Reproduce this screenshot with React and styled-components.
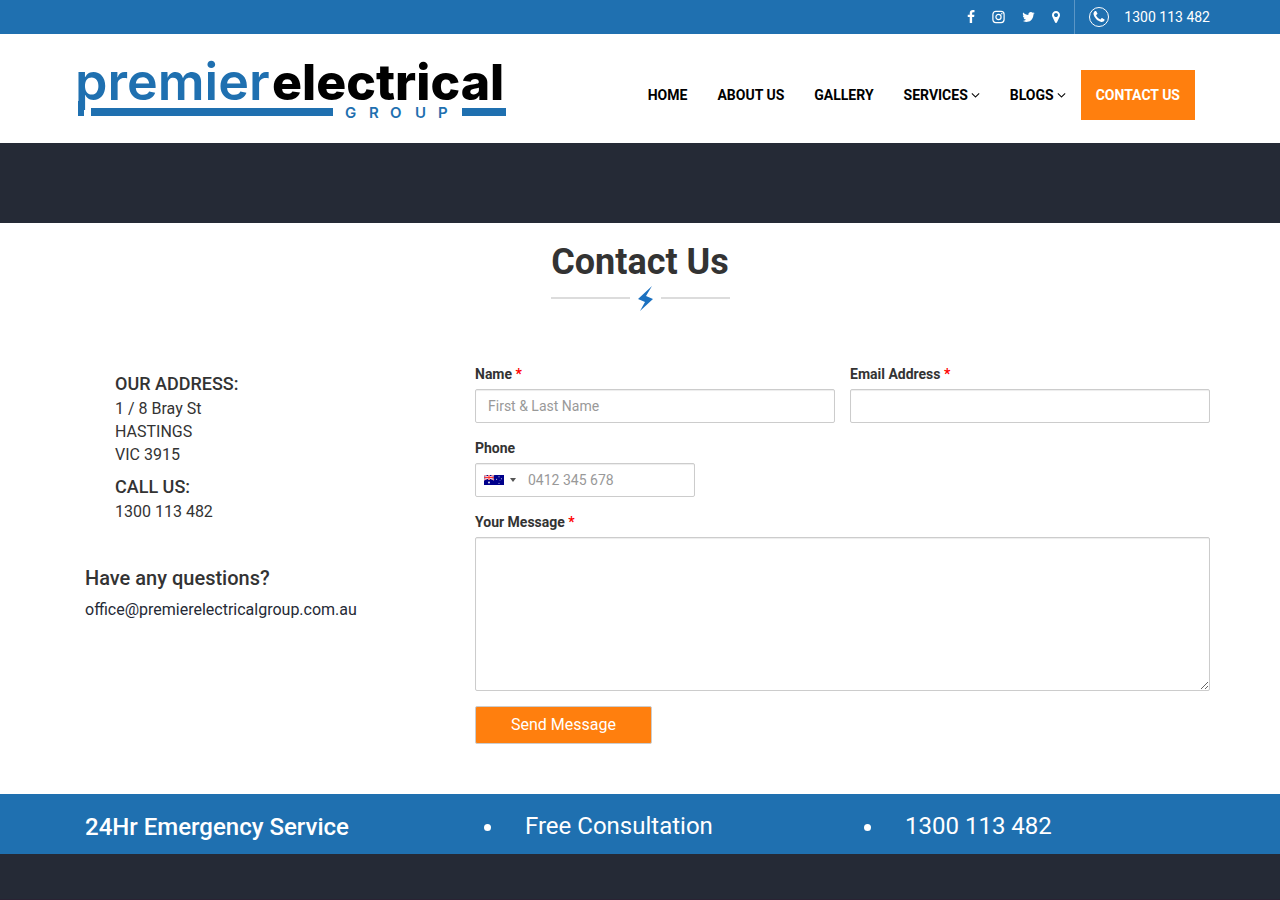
import React, { useState } from "react";
import styled, { createGlobalStyle } from "styled-components";

const navItems = [
  { label: "Home" },
  { label: "About Us" },
  { label: "Gallery" },
  { label: "Services", menu: true },
  { label: "Blogs", menu: true },
  { label: "Contact Us", active: true },
];

const icons = {
  facebook:
    "M1343 12v264h-157q-86 0-116 36t-30 108v189h293l-39 296h-254v759h-306v-759h-255v-296h255v-218q0-186 104-288.5t277-102.5q147 0 228 12z",
  twitter:
    "M1684 408q-67 98-162 167 1 14 1 42 0 130-38 259.5t-115.5 248.5-184.5 210.5-258 146-323 54.5q-271 0-496-145 35 4 78 4 225 0 401-138-105-2-188-64.5t-114-159.5q33 5 61 5 43 0 85-11-112-23-185.5-111.5t-73.5-205.5v-4q68 38 146 41-66-44-105-115t-39-154q0-88 44-163 121 149 294.5 238.5t371.5 99.5q-8-38-8-74 0-134 94.5-228.5t228.5-94.5q140 0 236 102 109-21 205-78-37 115-142 178 93-10 186-50z",
  marker:
    "M1152 640q0-106-75-181t-181-75-181 75-75 181 75 181 181 75 181-75 75-181zm256 0q0 109-33 179l-364 774q-16 33-47.5 52t-67.5 19-67.5-19-46.5-52l-365-774q-33-70-33-179 0-212 150-362t362-150 362 150 150 362z",
  phone:
    "M1600 1240q0 27-10 70.5t-21 68.5q-21 50-122 106-94 51-186 51-27 0-53-3.5t-57.5-12.5-47-14.5-55.5-20.5-49-18q-98-35-175-83-127-79-264-216t-216-264q-48-77-83-175-3-9-18-49t-20.5-55.5-14.5-47-12.5-57.5-3.5-53q0-92 51-186 56-101 106-122 25-11 68.5-21t70.5-10q14 0 21 3 18 6 53 76 11 19 30 54t35 63.5 31 53.5q3 4 17.5 25t21.5 35.5 7 28.5q0 20-28.5 50t-62 55-62 53-28.5 46q0 9 5 22.5t8.5 20.5 14 24 11.5 19q76 137 174 235t235 174q2 1 19 11.5t24 14 20.5 8.5 22.5 5q18 0 46-28.5t53-62 55-62 50-28.5q14 0 28.5 7t35.5 21.5 25 17.5q25 15 53.5 31t63.5 35 54 30q70 35 76 53 3 7 3 21z",
  angle:
    "M1395 736q0 13-10 23l-466 466q-10 10-23 10t-23-10l-466-466q-10-10-10-23t10-23l50-50q10-10 23-10t23 10l393 393 393-393q10-10 23-10t23 10l50 50q10 10 10 23z",
};

// the glyphs sit in the middle of a 1792 unit square, width trims the sides
const Icon = ({ name, width = 14 }) => (
  <svg
    width={width}
    height="14"
    viewBox={`${(14 - width) * 64} 0 ${width * 128} 1792`}
    fill="currentColor"
    aria-hidden="true"
  >
    <path d={icons[name]} />
  </svg>
);

const Instagram = () => (
  <svg width="13" height="14" viewBox="0 0 13 14" fill="none" stroke="currentColor" aria-hidden="true">
    <rect x="0.9" y="1.4" width="11.2" height="11.2" rx="3" strokeWidth="1.2" />
    <circle cx="6.5" cy="7" r="2.6" strokeWidth="1.2" />
    <circle cx="9.8" cy="3.7" r="0.8" fill="currentColor" stroke="none" />
  </svg>
);

const Logo = () => (
  <svg width="436" height="75" viewBox="-3 -17 436 75" role="img" aria-label="Premier Electrical Group">
    <g fontFamily="Inter, 'Liberation Sans', sans-serif">
      <text x="-3" y="35" fontSize="52" fontWeight="600" fill="#1f70b0">premier</text>
      <text x="194" y="35" fontSize="50" fontWeight="800" fill="#000">electrical</text>
      <text x="267 291 312 337 360" y="53" fontSize="15" fontWeight="600" fill="#1f70b0">GROUP</text>
    </g>
    <path d="M0 36h6v15H0zM13 43h242v8H13zM384 43h44v8h-44z" fill="#1f70b0" />
  </svg>
);

const Divider = () => (
  <svg width="180" height="26" viewBox="0 0 180 26" aria-hidden="true">
    <path d="M1 11h79v2H1zM111 11h69v2h-69z" fill="#dcdcdc" />
    <path d="M102 0L88 13l7 3-5 9 13-12-7-3z" fill="#1c71c0" />
  </svg>
);

const Flag = () => (
  <svg width="20" height="10" viewBox="0 0 20 10" aria-hidden="true">
    <path d="M0 0h20v10H0z" fill="#00008b" />
    <path d="M0 0l10 5M10 0L0 5" stroke="#fff" strokeWidth="1.2" />
    <path d="M0 0l10 5M10 0L0 5" stroke="#f33" strokeWidth=".6" />
    <path d="M5 0v5M0 2.5h10" stroke="#fff" strokeWidth="1.8" />
    <path d="M5 0v5M0 2.5h10" stroke="#f33" strokeWidth="1.2" />
    <g fill="#fff">
      <circle cx="5" cy="7.5" r=".9" />
      <circle cx="15" cy="1.7" r=".5" />
      <circle cx="12.6" cy="4.3" r=".5" />
      <circle cx="17.4" cy="3.7" r=".5" />
      <circle cx="15" cy="8.3" r=".5" />
      <circle cx="16" cy="5.4" r=".3" />
    </g>
  </svg>
);

function App() {
  const [name, setName] = useState("");
  const [email, setEmail] = useState("");
  const [phone, setPhone] = useState("");
  const [message, setMessage] = useState("");

  return (
    <>
      <GlobalStyle />
      <TopBar>
        <TopInner>
          <Social>
            <a href="#facebook" aria-label="Facebook"><Icon name="facebook" width={8} /></a>
            <a href="#instagram" aria-label="Instagram"><Instagram /></a>
            <a href="#twitter" aria-label="Twitter"><Icon name="twitter" width={13} /></a>
            <a href="#map" aria-label="Map"><Icon name="marker" width={8} /></a>
          </Social>
          <TopPhone href="tel:1300113482">
            <PhoneCircle><Icon name="phone" /></PhoneCircle>
            1300 113 482
          </TopPhone>
        </TopInner>
      </TopBar>

      <Header>
        <HeaderInner>
          <LogoLink href="#home"><Logo /></LogoLink>
          <Nav>
            {navItems.map((item) => (
              <NavLink key={item.label} href="#" $active={item.active}>
                {item.label}
                {item.menu && <Icon name="angle" width={9} />}
              </NavLink>
            ))}
          </Nav>
        </HeaderInner>
      </Header>
      <Banner />

      <main>
        <TitleBlock>
          <Title>Contact Us</Title>
          <Divider />
        </TitleBlock>
        <Content>
          <aside>
            <Address>
              <AddressHeading>OUR ADDRESS:</AddressHeading>
              <AddressText>
                1 / 8 Bray St<br />
                HASTINGS<br />
                VIC 3915
              </AddressText>
              <AddressHeading>CALL US:</AddressHeading>
              <AddressText>1300 113 482</AddressText>
            </Address>
            <Question>Have any questions?</Question>
            <Email href="mailto:office@premierelectricalgroup.com.au">
              office@premierelectricalgroup.com.au
            </Email>
          </aside>
          <Form onSubmit={(e) => e.preventDefault()}>
            <FieldRow>
              <Field>
                <Label htmlFor="name">Name <Required>*</Required></Label>
                <Input id="name" type="text" placeholder="First & Last Name" value={name} onChange={(e) => setName(e.target.value)} />
              </Field>
              <Field>
                <Label htmlFor="email">Email Address <Required>*</Required></Label>
                <Input id="email" type="email" value={email} onChange={(e) => setEmail(e.target.value)} />
              </Field>
            </FieldRow>
            <Field>
              <Label htmlFor="phone">Phone</Label>
              <PhoneBox>
                <CountryButton type="button" aria-label="Australia">
                  <Flag />
                  <Caret />
                </CountryButton>
                <PhoneInput id="phone" type="tel" placeholder="0412 345 678" value={phone} onChange={(e) => setPhone(e.target.value)} />
              </PhoneBox>
            </Field>
            <Field>
              <Label htmlFor="message">Your Message <Required>*</Required></Label>
              <TextArea id="message" value={message} onChange={(e) => setMessage(e.target.value)} />
            </Field>
            <Submit type="submit">Send Message</Submit>
          </Form>
        </Content>
      </main>

      <Strip>
        <StripInner>
          <StripTitle>24Hr Emergency Service</StripTitle>
          <StripList><StripItem>Free Consultation</StripItem></StripList>
          <StripList><StripItem>1300 113 482</StripItem></StripList>
        </StripInner>
      </Strip>
      <Footer />
    </>
  );
}

const GlobalStyle = createGlobalStyle`
  * {
    box-sizing: border-box;
  }
  body {
    margin: 0;
    background: #fff;
    color: #333;
    font-family: Roboto, sans-serif;
    font-size: 14px;
    line-height: 20px;
    overflow-x: hidden;
  }
  #root {
    display: flex;
    flex-direction: column;
    min-height: 100vh;
  }
  a {
    color: inherit;
    text-decoration: none;
  }
  svg {
    display: block;
    flex-shrink: 0;
  }
`;

const Container = styled.div`
  width: 100%;
  max-width: 1170px;
  margin: 0 auto;
  padding: 0 15px;
`;

const TopBar = styled.div`
  background: #1f70b0;
  color: #fff;
`;

const TopInner = styled(Container)`
  display: flex;
  justify-content: flex-end;
`;

const Social = styled.div`
  display: flex;
  align-items: center;
  gap: 17px;
  padding: 10px 14px 10px 0;
  border-right: 1px solid #5b96c6;
`;

const TopPhone = styled.a`
  display: flex;
  align-items: center;
  gap: 15px;
  padding: 7px 0 7px 14px;
`;

const PhoneCircle = styled.span`
  display: flex;
  align-items: center;
  justify-content: center;
  width: 20px;
  height: 20px;
  border: 1px solid #fff;
  border-radius: 50%;
`;

const Header = styled.header`
  background: #fff;
`;

const HeaderInner = styled(Container)`
  display: flex;
  align-items: flex-end;
  justify-content: space-between;
  padding: 14px 30px 20px 20px;
`;

const LogoLink = styled.a`
  display: block;
`;

const Nav = styled.nav`
  display: flex;
  margin-bottom: 3px;
`;

const NavLink = styled.a`
  display: flex;
  align-items: center;
  gap: 3px;
  padding: 15px;
  font-weight: 700;
  text-transform: uppercase;
  white-space: nowrap;
  color: ${(props) => (props.$active ? "#fff" : "#000")};
  background: ${(props) => (props.$active ? "#ff7f0e" : "transparent")};
`;

const Banner = styled.div`
  height: 80px;
  background: #252a36;
`;

const TitleBlock = styled.div`
  display: flex;
  flex-direction: column;
  align-items: center;
  padding-top: 19px;
`;

const Title = styled.h1`
  margin: 0 0 4px;
  font-size: 36px;
  line-height: 40px;
  font-weight: 700;
`;

const Content = styled(Container)`
  display: grid;
  grid-template-columns: 375px 1fr;
  column-gap: 15px;
  padding: 52px 15px 50px 30px;
`;

const Address = styled.address`
  padding: 8px 0 0 30px;
  font-style: normal;
`;

const AddressHeading = styled.h4`
  margin: 0 0 2px;
  font-size: 18px;
  line-height: 23px;
  font-weight: 500;
`;

const AddressText = styled.p`
  margin: 0 0 9px;
  font-size: 16px;
  line-height: 23px;
`;

const Question = styled.h3`
  margin: 43px 0 8px;
  font-size: 20px;
  line-height: 24px;
  font-weight: 500;
`;

const Email = styled.a`
  font-size: 16px;
  line-height: 23px;
  color: #252a36;
`;

const Form = styled.form`
  display: flex;
  flex-direction: column;
  gap: 15px;
`;

const FieldRow = styled.div`
  display: grid;
  grid-template-columns: 1fr 1fr;
  gap: 15px;
`;

const Field = styled.div`
  display: flex;
  flex-direction: column;
  gap: 5px;
`;

const Label = styled.label`
  font-weight: 700;
`;

const Required = styled.span`
  color: #f00;
`;

const Input = styled.input`
  width: 100%;
  height: 34px;
  padding: 6px 12px;
  border: 1px solid #ccc;
  border-radius: 2px;
  box-shadow: inset 0 1px 1px rgba(0, 0, 0, 0.075);
  background: #fff;
  color: #555;
  font: inherit;
  &::placeholder {
    color: #999;
  }
`;

const PhoneBox = styled.div`
  display: flex;
  width: 220px;
  height: 34px;
  border: 1px solid #ccc;
  border-radius: 2px;
  box-shadow: inset 0 1px 1px rgba(0, 0, 0, 0.075);
`;

const CountryButton = styled.button`
  display: flex;
  align-items: center;
  gap: 6px;
  padding: 0 6px 0 8px;
  border: 0;
  background: none;
`;

const Caret = styled.span`
  border-left: 3px solid transparent;
  border-right: 3px solid transparent;
  border-top: 4px solid #555;
`;

const PhoneInput = styled(Input)`
  flex: 1;
  height: auto;
  min-width: 0;
  padding: 0 6px;
  border: 0;
  box-shadow: none;
  background: none;
`;

const TextArea = styled(Input).attrs({ as: "textarea" })`
  height: 154px;
  resize: both;
`;

const Submit = styled.button`
  align-self: flex-start;
  padding: 7px 35px;
  border: 1px solid #ccc;
  border-radius: 2px;
  background: #ff7f0e;
  color: #fff;
  font-family: inherit;
  font-size: 16px;
  line-height: 22px;
`;

const Strip = styled.section`
  background: #1f70b0;
  color: #fff;
`;

const StripInner = styled(Container)`
  display: grid;
  grid-template-columns: 400px 380px 1fr;
  padding: 18px 15px 13px 30px;
  font-size: 24px;
  line-height: 28px;
`;

const StripTitle = styled.h3`
  margin: 0;
  padding-top: 1px;
  font-size: 24px;
  line-height: 28px;
  font-weight: 500;
`;

const StripList = styled.ul`
  margin: 0;
  padding-left: 20px;
`;

const StripItem = styled.li`
  padding-left: 20px;
`;

const Footer = styled.footer`
  flex: 1;
  min-height: 46px;
  background: #252a36;
  border-bottom: 1px solid #2a2233;
`;

export default App;
